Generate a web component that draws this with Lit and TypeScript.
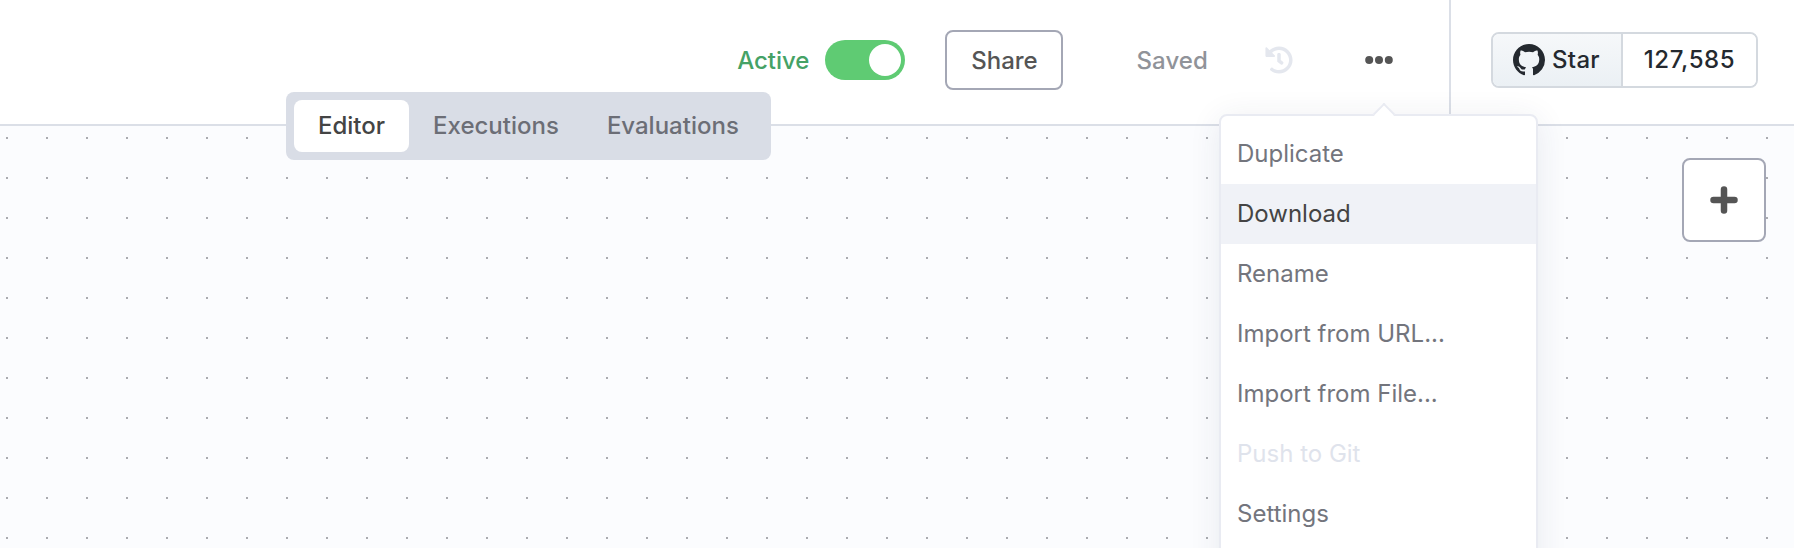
import { LitElement, html, css } from "lit";
import { customElement } from "lit/decorators.js";

const GITHUB = "M8 0C3.58 0 0 3.58 0 8c0 3.54 2.29 6.53 5.47 7.59.4.07.55-.17.55-.38 0-.19-.01-.82-.01-1.49-2.01.37-2.53-.49-2.69-.94-.09-.23-.48-.94-.82-1.13-.28-.15-.68-.52-.01-.53.63-.01 1.08.58 1.23.82.72 1.21 1.87.87 2.33.66.07-.52.28-.87.51-1.07-1.78-.2-3.64-.89-3.64-3.95 0-.87.31-1.59.82-2.15-.08-.2-.36-1.02.08-2.12 0 0 .67-.21 2.2.82.64-.18 1.32-.27 2-.27.68 0 1.36.09 2 .27 1.53-1.04 2.2-.82 2.2-.82.44 1.1.16 1.92.08 2.12.51.56.82 1.27.82 2.15 0 3.07-1.87 3.75-3.65 3.95.29.25.54.73.54 1.48 0 1.07-.01 1.93-.01 2.2 0 .21.15.46.55.38A8.013 8.013 0 0016 8c0-4.42-3.58-8-8-8z";
const HISTORY = "M504 255.531c.253 136.64-111.18 248.372-247.82 248.468-59.015.042-113.223-20.53-155.822-54.911-11.077-8.94-11.905-25.541-1.839-35.607l11.267-11.267c8.609-8.609 22.353-9.551 31.891-1.984C173.062 425.135 212.781 440 256 440c101.705 0 184-82.311 184-184 0-101.705-82.311-184-184-184-48.814 0-93.149 18.969-126.068 49.932l50.754 50.754c10.08 10.08 2.941 27.314-11.313 27.314H24c-8.837 0-16-7.163-16-16V38.627c0-14.254 17.234-21.393 27.314-11.314l49.372 49.372C129.209 34.136 189.552 8 256 8c136.81 0 247.747 110.78 248 247.531zm-180.912 78.784l9.823-12.63c8.138-10.463 6.253-25.542-4.21-33.679L288 256.349V152c0-13.255-10.745-24-24-24h-16c-13.255 0-24 10.745-24 24v135.651l65.409 50.874c10.463 8.137 25.541 6.253 33.679-4.21z";

@customElement("app-root")
export class AppRoot extends LitElement {
  static styles = css`
    :host {
      display: block;
      font-family: Inter, "Liberation Sans", sans-serif;
      font-size: 24px;
      color: #555;
    }
    * { box-sizing: border-box; }
    .page {
      position: relative;
      width: 1794px;
      height: 548px;
      overflow: hidden;
      display: flex;
      flex-direction: column;
      background: #fff;
    }
    header {
      height: 126px;
      flex: none;
      border-bottom: 2px solid #dbdfe7;
      display: flex;
      align-items: center;
      justify-content: flex-end;
      padding: 0 36px 4px 0;
      background: #fff;
    }
    .active { color: #45a266; font-weight: 450; margin-right: 16px; }
    .toggle {
      width: 80px;
      height: 40px;
      border-radius: 20px;
      background: #5fcb73;
      display: flex;
      justify-content: flex-end;
      align-items: center;
      padding-right: 4px;
      margin-right: 40px;
    }
    .knob { width: 32px; height: 32px; border-radius: 50%; background: #fff; }
    .share {
      width: 118px;
      height: 60px;
      border: 2px solid #a4a7b5;
      border-radius: 8px;
      display: flex;
      align-items: center;
      justify-content: center;
      font-weight: 450;
      color: #555;
      margin-right: 73px;
    }
    .saved { color: #909399; font-weight: 500; margin-right: 57px; letter-spacing: 0.1px; }
    .history { width: 28px; height: 28px; fill: #e4e7ee; display: block; margin-right: 72px; }
    .dots { width: 28px; height: 8px; fill: #555; display: block; margin-right: 56px; }
    .divider {
      width: 2px;
      align-self: stretch;
      margin-bottom: -4px;
      background: #dbdfe7;
      margin-right: 40px;
    }
    .gh {
      display: flex;
      height: 56px;
      width: 267px;
      border: 2px solid #d4d9df;
      border-radius: 8px;
      font-weight: 500;
      color: #24292f;
      overflow: hidden;
    }
    .gh-star {
      width: 130px;
      background: linear-gradient(#f6f8fa, #ebf0f4);
      border-right: 2px solid #d4d9df;
      display: flex;
      align-items: center;
      padding-left: 20px;
      gap: 7px;
    }
    .gh-star span { padding-bottom: 2px; letter-spacing: 0.3px; }
    .gh-star svg { width: 32px; height: 32px; fill: #24292f; display: block; flex: none; }
    .gh-count {
      flex: 1;
      display: flex;
      align-items: center;
      justify-content: center;
      background: #fff;
      padding-bottom: 2px;
      letter-spacing: 0.6px;
    }
    .canvas {
      flex: 1;
      background-color: #fbfcfe;
      background-image: radial-gradient(circle at 7px 12px, #aaabb0 1.2px, transparent 1.2px);
      background-size: 40px 40px;
    }
    .tabs {
      position: absolute;
      left: 286px;
      top: 92px;
      height: 68px;
      display: flex;
      padding: 8px;
      background: #d9dde6;
      border-radius: 8px;
      font-weight: 450;
      color: #6c6e76;
    }
    .tab { height: 52px; padding: 0 24px 2px; display: flex; align-items: center; border-radius: 8px; }
    .tab.on { background: #fff; color: #444; }
    .plus {
      position: absolute;
      left: 1682px;
      top: 158px;
      width: 84px;
      height: 84px;
      border: 2px solid #a4a7b5;
      border-radius: 8px;
      background: #fff;
      display: flex;
      align-items: center;
      justify-content: center;
    }
    .plus svg { width: 28px; height: 28px; display: block; stroke: #555; stroke-width: 6.5; stroke-linecap: round; }
    .menu {
      position: absolute;
      left: 1219px;
      top: 114px;
      width: 319px;
      height: 500px;
      padding-top: 8px;
      background: #fff;
      border: 2px solid #e9ebf2;
      border-radius: 8px;
      box-shadow: 0 4px 32px rgba(40, 50, 90, 0.09);
    }
    .arrow {
      position: absolute;
      left: 155px;
      top: -10px;
      width: 16px;
      height: 16px;
      background: #fff;
      border: 2px solid #e9ebf2;
      border-right: none;
      border-bottom: none;
      transform: rotate(45deg);
    }
    .item { position: relative; height: 60px; padding: 0 0 2px 16px; display: flex; align-items: center; color: #73757d; }
    .item.hover { background: #f0f2f7; color: #444; }
    .item.off { color: #dfe3ec; }
  `;

  render() {
    const items = [
      ["Duplicate", ""],
      ["Download", "hover"],
      ["Rename", ""],
      ["Import from URL...", ""],
      ["Import from File...", ""],
      ["Push to Git", "off"],
      ["Settings", ""],
    ];
    return html`
      <div class="page">
        <header>
          <span class="active">Active</span>
          <div class="toggle"><div class="knob"></div></div>
          <div class="share">Share</div>
          <span class="saved">Saved</span>
          <svg class="history" viewBox="0 0 512 512"><path d=${HISTORY}></path></svg>
          <svg class="dots" viewBox="0 0 28 8">
            <circle cx="4.2" cy="4" r="4"></circle>
            <circle cx="14" cy="4" r="4"></circle>
            <circle cx="23.8" cy="4" r="4"></circle>
          </svg>
          <div class="divider"></div>
          <div class="gh">
            <div class="gh-star">
              <svg viewBox="0 0 16 16"><path d=${GITHUB}></path></svg>
              <span>Star</span>
            </div>
            <div class="gh-count">127,585</div>
          </div>
        </header>
        <div class="canvas"></div>
        <div class="tabs">
          <div class="tab on">Editor</div>
          <div class="tab">Executions</div>
          <div class="tab">Evaluations</div>
        </div>
        <div class="plus">
          <svg viewBox="0 0 28 28"><path d="M14 3.5V24.5M3.5 14H24.5"></path></svg>
        </div>
        <div class="menu">
          <div class="arrow"></div>
          ${items.map(([t, c]) => html`<div class="item ${c}">${t}</div>`)}
        </div>
      </div>
    `;
  }
}
